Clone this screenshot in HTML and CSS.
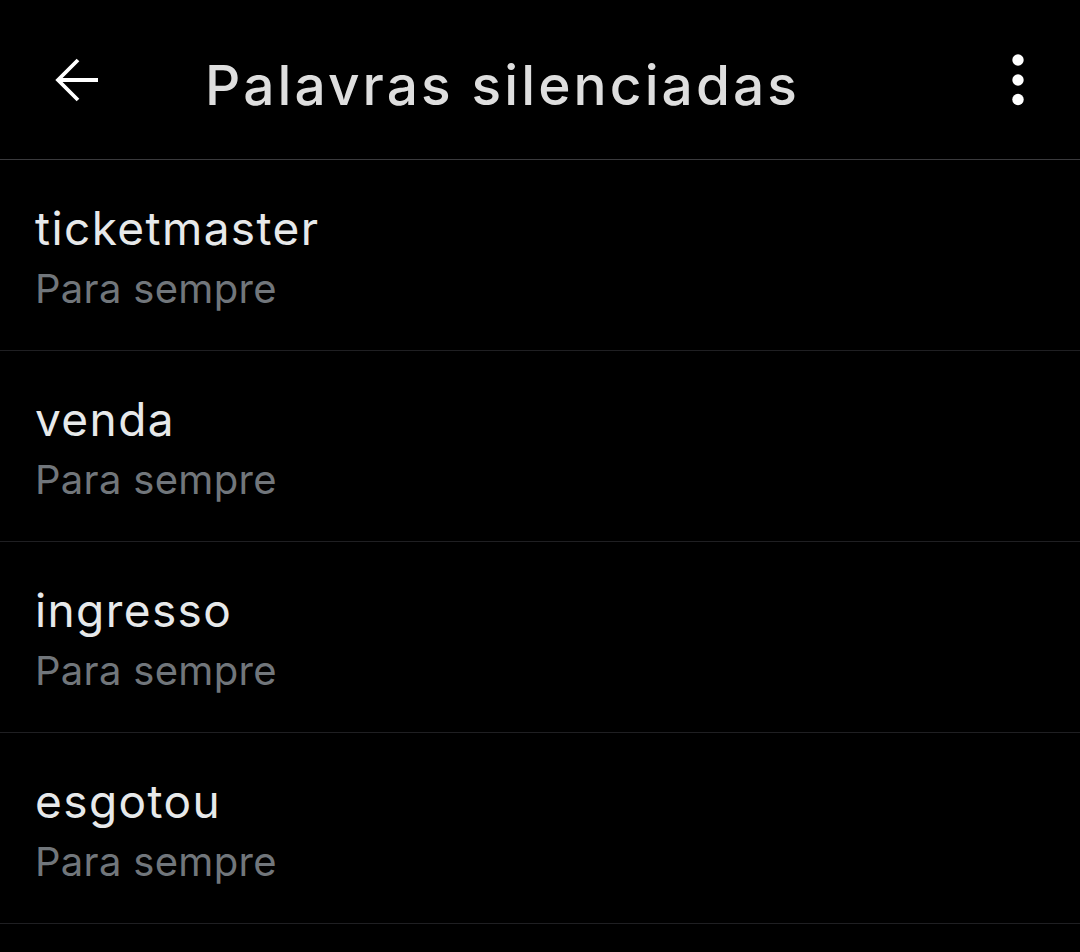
FILE: index.html
```html
<!DOCTYPE html>
<html lang="pt">
<head>
<meta charset="utf-8">
<title>Palavras silenciadas</title>
<link rel="stylesheet" href="styles.css">
</head>
<body>
<header class="topbar">
  <button class="icon-btn back" aria-label="Voltar">
    <svg width="48" height="48" viewBox="0 0 48 48"><path d="M45 24H6M25 4L5 24L25 44" fill="none" stroke="#fff" stroke-width="3.8" stroke-linejoin="miter"/></svg>
  </button>
  <h1 class="title">Palavras silenciadas</h1>
  <button class="icon-btn more" aria-label="Mais opções">
    <svg width="14" height="54" viewBox="0 0 14 54"><circle cx="7" cy="7" r="5.7" fill="#fff"/><circle cx="7" cy="27" r="5.7" fill="#fff"/><circle cx="7" cy="46.5" r="5.7" fill="#fff"/></svg>
  </button>
</header>
<ul class="list">
  <li class="item"><span class="word">ticketmaster</span><span class="dur">Para sempre</span></li>
  <li class="item"><span class="word">venda</span><span class="dur">Para sempre</span></li>
  <li class="item"><span class="word">ingresso</span><span class="dur">Para sempre</span></li>
  <li class="item"><span class="word">esgotou</span><span class="dur">Para sempre</span></li>
</ul>
</body>
</html>
```
FILE: styles.css
```css
html, body {
  margin: 0;
  padding: 0;
  background: #000;
}
body {
  font-family: Inter, Roboto, "Liberation Sans", sans-serif;
  color: #e7e9ea;
  width: 1080px;
  height: 952px;
  overflow: hidden;
}
.topbar {
  height: 160px;
  border-bottom: 1px solid #3a3a3d;
  display: flex;
  align-items: center;
  box-sizing: border-box;
}
.icon-btn {
  background: none;
  border: 0;
  padding: 0;
  display: flex;
  align-items: center;
  justify-content: center;
}
.back {
  margin-left: 53px;
  width: 48px;
  height: 48px;
  margin-top: 1px;
}
.title {
  margin: 0 0 0 104px;
  font-size: 55px;
  font-weight: 500;
  color: #dedede;
  letter-spacing: 3.1px;
  flex: 1;
  padding-top: 10px;
}
.more {
  margin-right: 55px;
  width: 14px;
  height: 54px;
  margin-top: 1px;
}
.list {
  list-style: none;
  margin: 0;
  padding: 0;
}
.item {
  height: 191px;
  border-bottom: 1px solid #1f1f22;
  display: flex;
  flex-direction: column;
  padding-left: 35px;
  padding-top: 38px;
  box-sizing: border-box;
}
.word {
  font-size: 46px;
  line-height: 60px;
  letter-spacing: 1.4px;
  color: #e7e9ea;
}
.dur {
  font-size: 40px;
  line-height: 62px;
  letter-spacing: 0.3px;
  color: #71767b;
}
```
